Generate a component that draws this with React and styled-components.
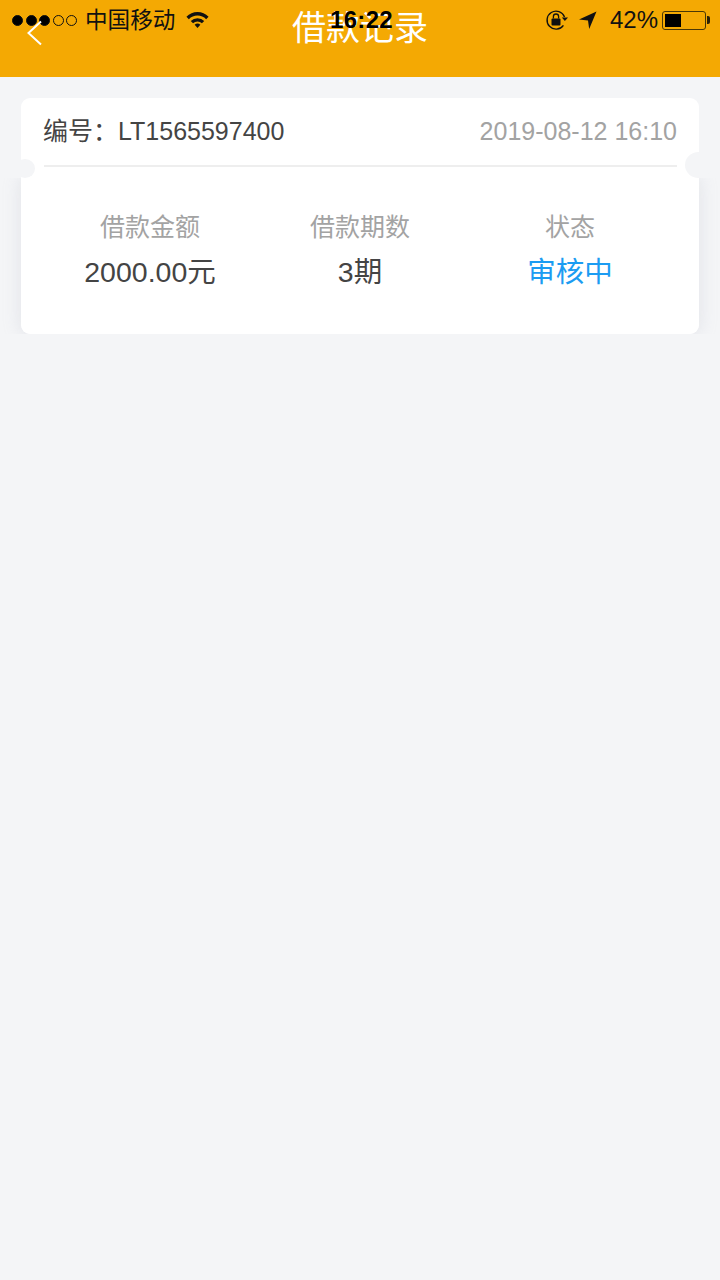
import React from "react";
import styled, { createGlobalStyle } from "styled-components";

const SANS = `"Liberation Sans", "Noto Sans CJK SC", sans-serif`;

const GlobalStyle = createGlobalStyle`
	html, body {
		margin: 0;
		padding: 0;
		background: #f4f5f7;
	}
`;

const App = () => {
	return (
		<Page>
			<GlobalStyle />
			<Header>
				<StatusBar>
					<StatusLeft>
						<Signal>
							<Dot $on />
							<Dot $on />
							<Dot $on />
							<Dot />
							<Dot />
						</Signal>
						<Carrier>中国移动</Carrier>
						<svg width="25" height="20" viewBox="0 0 26 20">
							<path d="M1.5 6.5 A16 16 0 0 1 24.5 6.5 L22 9.2 A12.5 12.5 0 0 0 4 9.2 Z" fill="#111" />
							<path d="M6 11 A10 10 0 0 1 20 11 L17.6 13.4 A6.6 6.6 0 0 0 8.4 13.4 Z" fill="#111" />
							<path d="M10 15 A4.4 4.4 0 0 1 16 15 L13 18.4 Z" fill="#111" />
						</svg>
					</StatusLeft>
					<Clock>16:22</Clock>
					<StatusRight>
						<svg width="24" height="22" viewBox="0 0 24 22">
							<path d="M19.5 8 A9 9 0 1 0 18.4 16.4" fill="none" stroke="#111" strokeWidth="1.4" />
							<path d="M16.8 8.6 H23 L19.9 12 Z" fill="#111" />
							<rect x="6.5" y="9.5" width="9" height="7" rx="1" fill="#111" />
							<path d="M8.4 9.5 V7.6 A2.6 2.6 0 0 1 13.6 7.6 V9.5" fill="none" stroke="#111" strokeWidth="1.3" />
						</svg>
						<svg width="20" height="20" viewBox="0 0 20 20">
							<path d="M18.5 1.5 L1 9.5 L10 10.6 L11.2 19 Z" fill="#111" />
						</svg>
						<Percent>42%</Percent>
						<Battery>
							<BatteryFill />
						</Battery>
					</StatusRight>
				</StatusBar>
				<BackIcon width="18" height="26" viewBox="0 0 18 26">
					<path d="M15 1.5 L2.5 13 L15 24.5" fill="none" stroke="#fff" strokeWidth="2" />
				</BackIcon>
				<Title>借款记录</Title>
			</Header>
			<Content>
				<Card>
					<CardTop>
						<Serial>编号：LT1565597400</Serial>
						<DateText>2019-08-12 16:10</DateText>
					</CardTop>
					<Stats>
						<Stat>
							<StatLabel>借款金额</StatLabel>
							<StatValue>2000.00元</StatValue>
						</Stat>
						<Stat>
							<StatLabel>借款期数</StatLabel>
							<StatValue>3期</StatValue>
						</Stat>
						<Stat>
							<StatLabel>状态</StatLabel>
							<StatValue $accent>审核中</StatValue>
						</Stat>
					</Stats>
					<NotchLeft />
					<NotchRight />
				</Card>
			</Content>
		</Page>
	);
};

export default App;

const Page = styled.div`
	width: 720px;
	height: 1280px;
	overflow: hidden;
	background: #f4f5f7;
	font-family: ${SANS};
`;
const Header = styled.header`
	position: relative;
	display: flex;
	justify-content: center;
	height: 77px;
	background: #f4a903;
`;
const StatusBar = styled.div`
	position: absolute;
	top: 0;
	left: 0;
	right: 0;
	height: 40px;
	display: flex;
	align-items: center;
	justify-content: space-between;
	padding: 0 15px 0 12px;
	color: #111;
`;
const StatusLeft = styled.div`
	display: flex;
	align-items: center;
	gap: 10px;
`;
const Signal = styled.div`
	display: flex;
	gap: 2.5px;
`;
const Dot = styled.span`
	width: 11px;
	height: 11px;
	box-sizing: border-box;
	border-radius: 50%;
	border: 1px solid #111;
	background: ${({ $on }) => ($on ? "#000" : "transparent")};
`;
const Carrier = styled.span`
	font-size: 22.6px;
	line-height: 40px;
	margin: 1px 0 0 -2px;
`;
const Clock = styled.span`
	position: absolute;
	left: 3px;
	right: 0;
	text-align: center;
	font-size: 24px;
	font-weight: 700;
	letter-spacing: 0.3px;
	line-height: 40px;
	color: #000;
`;
const StatusRight = styled.div`
	display: flex;
	align-items: center;
	gap: 9px;
	margin-right: -1px;
`;
const Percent = styled.span`
	font-size: 24px;
	line-height: 40px;
	margin-left: 3px;
	margin-right: -5px;
`;
const Battery = styled.div`
	position: relative;
	box-sizing: border-box;
	width: 44px;
	height: 19px;
	padding: 2px;
	border: 1px solid #4a3806;
	border-radius: 3px;
	&::after {
		content: "";
		position: absolute;
		right: -5px;
		top: 4px;
		width: 3px;
		height: 8px;
		border-radius: 0 2px 2px 0;
		background: #2a2005;
	}
`;
const BatteryFill = styled.div`
	width: 42%;
	height: 100%;
	background: #000;
`;
const BackIcon = styled.svg`
	position: absolute;
	left: 26px;
	top: 20px;
`;
const Title = styled.h1`
	margin: 8px 0 0;
	font-size: 34px;
	font-weight: 400;
	line-height: 40px;
	color: #fff;
`;
const Content = styled.main`
	padding: 21px 21px 0;
`;
const Card = styled.section`
	position: relative;
	display: flex;
	flex-direction: column;
	height: 236px;
	background: #fff;
	border-radius: 9px;
`;
const CardTop = styled.div`
	display: flex;
	align-items: center;
	justify-content: space-between;
	box-sizing: content-box;
	height: 65px;
	padding-bottom: 2px;
	margin: 0 22px 0 23px;
	border-bottom: 2px solid #eeeeee;
`;
const Serial = styled.span`
	margin-left: -1px;
	font-size: 25px;
	line-height: 30px;
	color: #444;
`;
const DateText = styled.span`
	font-size: 25px;
	line-height: 30px;
	color: #a3a3a3;
`;
const NotchLeft = styled.span`
	position: absolute;
	left: -6px;
	top: 61px;
	width: 20px;
	height: 19px;
	border-radius: 50%;
	background: #f4f5f7;
`;
const NotchRight = styled.span`
	position: absolute;
	right: -13px;
	top: 54px;
	width: 27px;
	height: 26px;
	border-radius: 50%;
	background: #f4f5f7;
`;
// the shadow only shows on the sides of this lower part, so it is clipped top and bottom
const Stats = styled.div`
	flex: 1;
	display: grid;
	grid-template-columns: 258px 162px 258px;
	align-content: start;
	margin-top: 11px;
	padding-top: 31px;
	background: #fff;
	border-radius: 0 0 9px 9px;
	box-shadow: 0 0 18px rgba(170, 175, 190, 0.26);
	clip-path: inset(0 -21px 0 -21px);
`;
const Stat = styled.div`
	display: flex;
	flex-direction: column;
	align-items: center;
	gap: 9px;
`;
const StatLabel = styled.span`
	font-size: 25px;
	line-height: 36px;
	color: #a3a3a3;
`;
const StatValue = styled.span`
	font-size: 28.5px;
	line-height: 36px;
	color: ${({ $accent }) => ($accent ? "#1b9cf2" : "#444")};
`;
